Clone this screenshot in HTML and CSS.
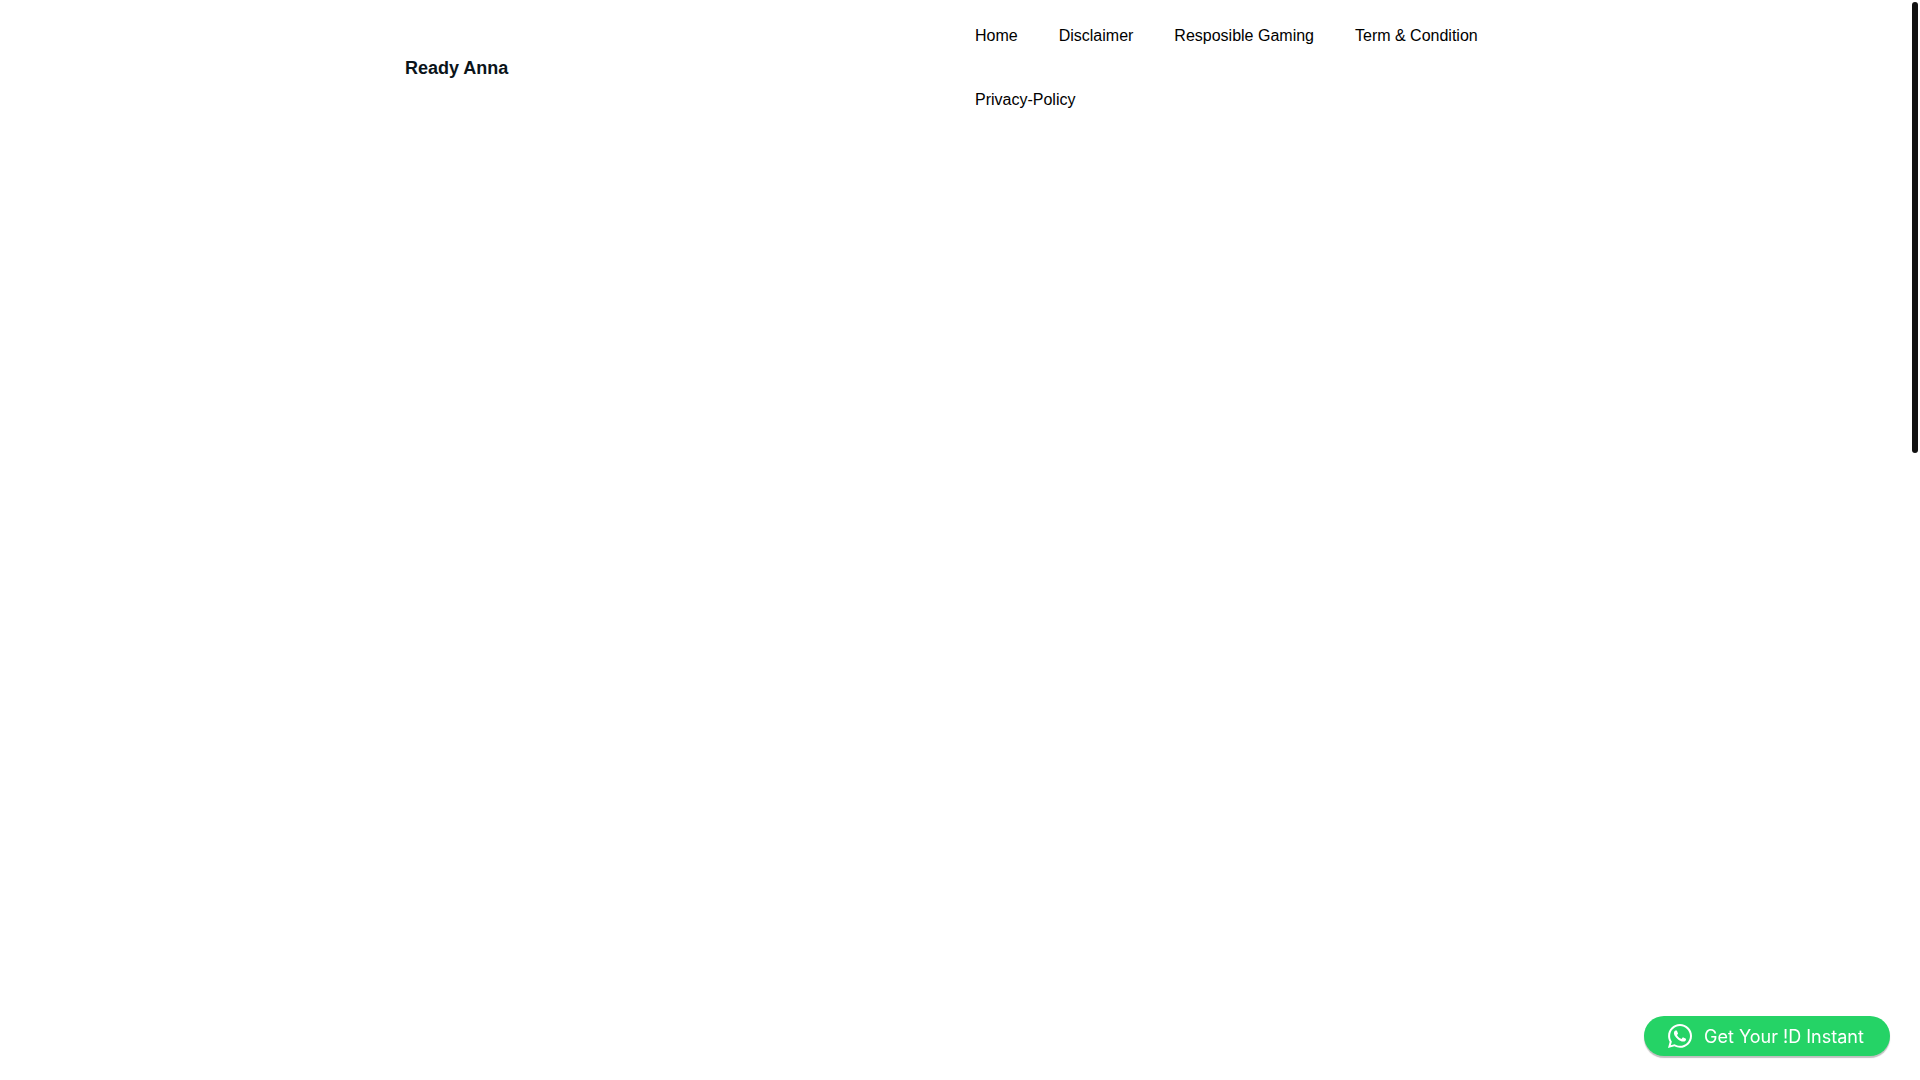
FILE: index.html
```html
<!DOCTYPE html>
<html lang="en">
<head>
    <meta charset="UTF-8">
    <meta name="viewport" content="width=device-width, initial-scale=1.0">
    <title>Ready Anna</title>
    <link rel="stylesheet" href="styles.css">
</head>
<body>

    <header class="site-header">
        <div class="container">
            <div class="site-title">
                <a href="#">Ready Anna</a>
            </div>
            <nav class="main-nav">
                <ul>
                    <li><a href="#">Home</a></li>
                    <li><a href="#">Disclaimer</a></li>
                    <li><a href="#">Resposible Gaming</a></li>
                    <li><a href="#">Term &amp; Condition</a></li>
                    <li><a href="#">Privacy-Policy</a></li>
                </ul>
            </nav>
        </div>
    </header>

    <a class="whatsapp-btn" href="#">
        <svg viewBox="0 0 448 448" aria-hidden="true">
            <path fill="#fff" d="M380.900 65.100C339 23.100 283.200 0 223.900 0 101.500 0 1.900 99.600 1.900 222c0 39.100 10.200 77.300 29.600 111L0 448l117.700-30.900c32.400 17.700 68.900 27 106.100 27h.1c122.300 0 224.100-99.600 224.100-222 0-59.300-25.200-115-67.100-157zm-157 341.600c-33.200 0-65.700-8.900-94-25.700l-6.700-4-69.800 18.300L72 327.200l-4.400-7c-18.500-29.400-28.200-63.300-28.200-98.200 0-101.700 82.800-184.500 184.600-184.500 49.300 0 95.600 19.200 130.400 54.100 34.800 34.900 56.200 81.200 56.100 130.500 0 101.800-84.900 184.600-186.600 184.600zm101.200-138.200c-5.500-2.800-32.800-16.200-37.900-18-5.100-1.900-8.800-2.800-12.500 2.800-3.700 5.600-14.300 18-17.600 21.800-3.200 3.700-6.500 4.200-12 1.400-32.600-16.300-54-29.100-75.500-66-5.700-9.800 5.700-9.100 16.300-30.300 1.800-3.700.9-6.900-.5-9.700-1.400-2.800-12.500-30.100-17.100-41.200-4.500-10.800-9.100-9.300-12.500-9.500-3.200-.2-6.900-.2-10.600-.2-3.700 0-9.700 1.400-14.800 6.900-5.100 5.600-19.400 19-19.400 46.300 0 27.300 19.900 53.700 22.600 57.400 2.800 3.700 39.100 59.700 94.800 83.800 35.200 15.200 49 16.500 66.600 13.900 10.700-1.600 32.800-13.400 37.400-26.400 4.600-13 4.600-24.100 3.200-26.400-1.300-2.500-5-3.900-10.500-6.600z"/>
        </svg>
        <span>Get Your !D Instant</span>
    </a>

    <div class="scroll-thumb"></div>

</body>
</html>
```

FILE: styles.css
```css
* {
    box-sizing: border-box;
}

body {
    margin: 0;
    min-height: 100vh;
    font-family: "Liberation Sans", Arial, sans-serif;
    font-size: 16px;
    background-color: #fff;
    color: #000;
}

a {
    color: inherit;
    text-decoration: none;
}

.site-header {
    padding: 4px 0;
}

.container {
    display: flex;
    align-items: center;
    max-width: 1140px;
    margin: 0 auto;
}

.site-title,
.main-nav {
    flex: 1;
    padding: 0 15px;
}

.site-title {
    font-size: 18px;
    font-weight: 700;
    color: #0b141a;
}

.main-nav ul {
    display: flex;
    flex-wrap: wrap;
    column-gap: 41px;
    margin: 0;
    padding: 0;
    list-style: none;
}

.main-nav a {
    display: block;
    line-height: 64px;
}

/* floating chat button */
.whatsapp-btn {
    position: fixed;
    right: 30px;
    bottom: 24px;
    display: flex;
    align-items: center;
    gap: 12px;
    min-width: 246px;
    height: 40px;
    padding: 0 24px;
    border-radius: 20px;
    background-color: #25d366;
    box-shadow: 0 2px 1px rgba(0, 0, 0, 0.25);
    font-family: Inter, sans-serif;
    font-size: 18px;
    color: #fff;
}

.whatsapp-btn svg {
    width: 24px;
    height: 24px;
}

.scroll-thumb {
    position: fixed;
    top: 2px;
    right: 2px;
    width: 6px;
    height: 451px;
    border-radius: 3px;
    background-color: #111;
}
```
